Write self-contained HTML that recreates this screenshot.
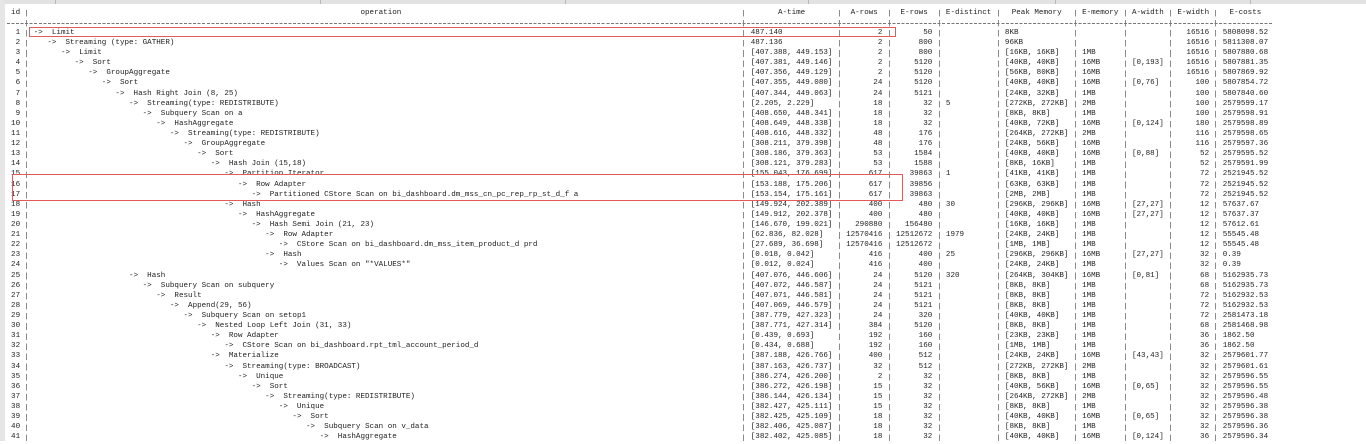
<!DOCTYPE html>
<html><head><meta charset="utf-8"><style>
body{margin:0;width:1366px;height:441px;background:#fff;position:relative;overflow:hidden;font:7.57px "Liberation Mono",monospace;color:#222}
#top{position:absolute;left:0;top:0;width:1366px;height:4px;background:#e2e2e2}
#top i{position:absolute;top:0;width:1px;height:4px;background:#b8b8b8}
#left{position:absolute;left:0;top:0;width:5px;height:441px;background:#e6e6e6}
#g{position:absolute;left:6.5px;top:7.7px;width:1360px;height:436px}
p{margin:0;height:10.11px;line-height:10.11px;position:relative;white-space:pre}
p span{position:absolute;top:0}
.i{left:0;width:3ch;text-align:right}
.t{left:164ch}
.ar{left:185ch;width:8ch;text-align:right}
.er{left:196ch;width:8ch;text-align:right}
.ed{left:207ch}
.pk{left:220ch}
.em{left:237ch}
.aw{left:248ch}
.ew{left:258ch;width:7ch;text-align:right}
.ec{left:268ch}
.v{position:absolute;top:0;width:1px;height:436px;background:repeating-linear-gradient(to bottom,transparent 0 1.8px,#8c8c8c 1.8px 8.4px,transparent 8.4px 10.11px)}
#dash{position:absolute;left:0;top:15.1px;width:279ch;height:1px;background:repeating-linear-gradient(90deg,#777 0 3px,transparent 3px 4.54px)}
.box{position:absolute;border:1px solid #e25a5a}
</style></head><body>
<div id="top"><i style="left:55px"></i><i style="left:320px"></i><i style="left:565px"></i><i style="left:808px"></i><i style="left:1055px"></i><i style="left:1250px"></i></div>
<div id="left"></div>
<div id="g">
<div class="v" style="left:calc(4.5ch - .5px)"></div>
<div class="v" style="left:calc(162.5ch - .5px)"></div>
<div class="v" style="left:calc(183.5ch - .5px)"></div>
<div class="v" style="left:calc(194.5ch - .5px)"></div>
<div class="v" style="left:calc(205.5ch - .5px)"></div>
<div class="v" style="left:calc(218.5ch - .5px)"></div>
<div class="v" style="left:calc(235.5ch - .5px)"></div>
<div class="v" style="left:calc(246.5ch - .5px)"></div>
<div class="v" style="left:calc(256.5ch - .5px)"></div>
<div class="v" style="left:calc(266.5ch - .5px)"></div>
<div id="dash"></div>
<p><span style="left:1ch">id</span><span style="left:78ch">operation</span><span style="left:164ch;width:18ch;text-align:center">A-time</span><span style="left:185ch;width:8ch;text-align:center">A-rows</span><span style="left:196ch;width:8ch;text-align:center">E-rows</span><span style="left:207ch">E-distinct</span><span style="left:220ch;width:14ch;text-align:center">Peak Memory</span><span style="left:237ch">E-memory</span><span style="left:248ch">A-width</span><span style="left:258ch">E-width</span><span style="left:268ch;width:10ch;text-align:center">E-costs</span></p>
<p></p>
<p><span class=i>1</span><span style="left:6ch">->  Limit</span><span class=t>487.140</span><span class=ar>2</span><span class=er>50</span><span class=pk>8KB</span><span class=ew>16516</span><span class=ec>5808098.52</span></p>
<p><span class=i>2</span><span style="left:9ch">->  Streaming (type: GATHER)</span><span class=t>487.136</span><span class=ar>2</span><span class=er>800</span><span class=pk>96KB</span><span class=ew>16516</span><span class=ec>5811308.07</span></p>
<p><span class=i>3</span><span style="left:12ch">->  Limit</span><span class=t>[407.388, 449.153]</span><span class=ar>2</span><span class=er>800</span><span class=pk>[16KB, 16KB]</span><span class=em>1MB</span><span class=ew>16516</span><span class=ec>5807880.68</span></p>
<p><span class=i>4</span><span style="left:15ch">->  Sort</span><span class=t>[407.381, 449.146]</span><span class=ar>2</span><span class=er>5120</span><span class=pk>[40KB, 40KB]</span><span class=em>16MB</span><span class=aw>[0,193]</span><span class=ew>16516</span><span class=ec>5807881.35</span></p>
<p><span class=i>5</span><span style="left:18ch">->  GroupAggregate</span><span class=t>[407.356, 449.129]</span><span class=ar>2</span><span class=er>5120</span><span class=pk>[56KB, 80KB]</span><span class=em>16MB</span><span class=ew>16516</span><span class=ec>5807869.92</span></p>
<p><span class=i>6</span><span style="left:21ch">->  Sort</span><span class=t>[407.355, 449.080]</span><span class=ar>24</span><span class=er>5120</span><span class=pk>[40KB, 40KB]</span><span class=em>16MB</span><span class=aw>[0,76]</span><span class=ew>100</span><span class=ec>5807854.72</span></p>
<p><span class=i>7</span><span style="left:24ch">->  Hash Right Join (8, 25)</span><span class=t>[407.344, 449.063]</span><span class=ar>24</span><span class=er>5121</span><span class=pk>[24KB, 32KB]</span><span class=em>1MB</span><span class=ew>100</span><span class=ec>5807840.60</span></p>
<p><span class=i>8</span><span style="left:27ch">->  Streaming(type: REDISTRIBUTE)</span><span class=t>[2.205, 2.229]</span><span class=ar>18</span><span class=er>32</span><span class=ed>5</span><span class=pk>[272KB, 272KB]</span><span class=em>2MB</span><span class=ew>100</span><span class=ec>2579599.17</span></p>
<p><span class=i>9</span><span style="left:30ch">->  Subquery Scan on a</span><span class=t>[408.650, 448.341]</span><span class=ar>18</span><span class=er>32</span><span class=pk>[8KB, 8KB]</span><span class=em>1MB</span><span class=ew>100</span><span class=ec>2579598.91</span></p>
<p><span class=i>10</span><span style="left:33ch">->  HashAggregate</span><span class=t>[408.649, 448.338]</span><span class=ar>18</span><span class=er>32</span><span class=pk>[40KB, 72KB]</span><span class=em>16MB</span><span class=aw>[0,124]</span><span class=ew>180</span><span class=ec>2579598.89</span></p>
<p><span class=i>11</span><span style="left:36ch">->  Streaming(type: REDISTRIBUTE)</span><span class=t>[408.616, 448.332]</span><span class=ar>48</span><span class=er>176</span><span class=pk>[264KB, 272KB]</span><span class=em>2MB</span><span class=ew>116</span><span class=ec>2579598.65</span></p>
<p><span class=i>12</span><span style="left:39ch">->  GroupAggregate</span><span class=t>[308.211, 379.398]</span><span class=ar>48</span><span class=er>176</span><span class=pk>[24KB, 56KB]</span><span class=em>16MB</span><span class=ew>116</span><span class=ec>2579597.36</span></p>
<p><span class=i>13</span><span style="left:42ch">->  Sort</span><span class=t>[308.186, 379.363]</span><span class=ar>53</span><span class=er>1584</span><span class=pk>[40KB, 40KB]</span><span class=em>16MB</span><span class=aw>[0,88]</span><span class=ew>52</span><span class=ec>2579595.52</span></p>
<p><span class=i>14</span><span style="left:45ch">->  Hash Join (15,18)</span><span class=t>[308.121, 379.283]</span><span class=ar>53</span><span class=er>1588</span><span class=pk>[8KB, 16KB]</span><span class=em>1MB</span><span class=ew>52</span><span class=ec>2579591.99</span></p>
<p><span class=i>15</span><span style="left:48ch">->  Partition Iterator</span><span class=t>[155.043, 176.699]</span><span class=ar>617</span><span class=er>39863</span><span class=ed>1</span><span class=pk>[41KB, 41KB]</span><span class=em>1MB</span><span class=ew>72</span><span class=ec>2521945.52</span></p>
<p><span class=i>16</span><span style="left:51ch">->  Row Adapter</span><span class=t>[153.188, 175.206]</span><span class=ar>617</span><span class=er>39856</span><span class=pk>[63KB, 63KB]</span><span class=em>1MB</span><span class=ew>72</span><span class=ec>2521945.52</span></p>
<p><span class=i>17</span><span style="left:54ch">->  Partitioned CStore Scan on bi_dashboard.dm_mss_cn_pc_rep_rp_st_d_f a</span><span class=t>[153.154, 175.161]</span><span class=ar>617</span><span class=er>39863</span><span class=pk>[2MB, 2MB]</span><span class=em>1MB</span><span class=ew>72</span><span class=ec>2521945.52</span></p>
<p><span class=i>18</span><span style="left:48ch">->  Hash</span><span class=t>[149.924, 202.389]</span><span class=ar>400</span><span class=er>480</span><span class=ed>30</span><span class=pk>[296KB, 296KB]</span><span class=em>16MB</span><span class=aw>[27,27]</span><span class=ew>12</span><span class=ec>57637.67</span></p>
<p><span class=i>19</span><span style="left:51ch">->  HashAggregate</span><span class=t>[149.912, 202.378]</span><span class=ar>400</span><span class=er>480</span><span class=pk>[40KB, 40KB]</span><span class=em>16MB</span><span class=aw>[27,27]</span><span class=ew>12</span><span class=ec>57637.37</span></p>
<p><span class=i>20</span><span style="left:54ch">->  Hash Semi Join (21, 23)</span><span class=t>[146.670, 199.021]</span><span class=ar>290880</span><span class=er>156480</span><span class=pk>[16KB, 16KB]</span><span class=em>1MB</span><span class=ew>12</span><span class=ec>57612.61</span></p>
<p><span class=i>21</span><span style="left:57ch">->  Row Adapter</span><span class=t>[62.836, 82.028]</span><span class=ar>12570416</span><span class=er>12512672</span><span class=ed>1979</span><span class=pk>[24KB, 24KB]</span><span class=em>1MB</span><span class=ew>12</span><span class=ec>55545.48</span></p>
<p><span class=i>22</span><span style="left:60ch">->  CStore Scan on bi_dashboard.dm_mss_item_product_d prd</span><span class=t>[27.689, 36.698]</span><span class=ar>12570416</span><span class=er>12512672</span><span class=pk>[1MB, 1MB]</span><span class=em>1MB</span><span class=ew>12</span><span class=ec>55545.48</span></p>
<p><span class=i>23</span><span style="left:57ch">->  Hash</span><span class=t>[0.018, 0.042]</span><span class=ar>416</span><span class=er>400</span><span class=ed>25</span><span class=pk>[296KB, 296KB]</span><span class=em>16MB</span><span class=aw>[27,27]</span><span class=ew>32</span><span class=ec>0.39</span></p>
<p><span class=i>24</span><span style="left:60ch">->  Values Scan on "*VALUES*"</span><span class=t>[0.012, 0.024]</span><span class=ar>416</span><span class=er>400</span><span class=pk>[24KB, 24KB]</span><span class=em>1MB</span><span class=ew>32</span><span class=ec>0.39</span></p>
<p><span class=i>25</span><span style="left:27ch">->  Hash</span><span class=t>[407.076, 446.606]</span><span class=ar>24</span><span class=er>5120</span><span class=ed>320</span><span class=pk>[264KB, 304KB]</span><span class=em>16MB</span><span class=aw>[0,81]</span><span class=ew>68</span><span class=ec>5162935.73</span></p>
<p><span class=i>26</span><span style="left:30ch">->  Subquery Scan on subquery</span><span class=t>[407.072, 446.587]</span><span class=ar>24</span><span class=er>5121</span><span class=pk>[8KB, 8KB]</span><span class=em>1MB</span><span class=ew>68</span><span class=ec>5162935.73</span></p>
<p><span class=i>27</span><span style="left:33ch">->  Result</span><span class=t>[407.071, 446.581]</span><span class=ar>24</span><span class=er>5121</span><span class=pk>[8KB, 8KB]</span><span class=em>1MB</span><span class=ew>72</span><span class=ec>5162932.53</span></p>
<p><span class=i>28</span><span style="left:36ch">->  Append(29, 56)</span><span class=t>[407.069, 446.579]</span><span class=ar>24</span><span class=er>5121</span><span class=pk>[8KB, 8KB]</span><span class=em>1MB</span><span class=ew>72</span><span class=ec>5162932.53</span></p>
<p><span class=i>29</span><span style="left:39ch">->  Subquery Scan on setop1</span><span class=t>[387.779, 427.323]</span><span class=ar>24</span><span class=er>320</span><span class=pk>[40KB, 40KB]</span><span class=em>1MB</span><span class=ew>72</span><span class=ec>2581473.18</span></p>
<p><span class=i>30</span><span style="left:42ch">->  Nested Loop Left Join (31, 33)</span><span class=t>[387.771, 427.314]</span><span class=ar>384</span><span class=er>5120</span><span class=pk>[8KB, 8KB]</span><span class=em>1MB</span><span class=ew>68</span><span class=ec>2581468.98</span></p>
<p><span class=i>31</span><span style="left:45ch">->  Row Adapter</span><span class=t>[0.439, 0.693]</span><span class=ar>192</span><span class=er>160</span><span class=pk>[23KB, 23KB]</span><span class=em>1MB</span><span class=ew>36</span><span class=ec>1862.50</span></p>
<p><span class=i>32</span><span style="left:48ch">->  CStore Scan on bi_dashboard.rpt_tml_account_period_d</span><span class=t>[0.434, 0.688]</span><span class=ar>192</span><span class=er>160</span><span class=pk>[1MB, 1MB]</span><span class=em>1MB</span><span class=ew>36</span><span class=ec>1862.50</span></p>
<p><span class=i>33</span><span style="left:45ch">->  Materialize</span><span class=t>[387.188, 426.766]</span><span class=ar>400</span><span class=er>512</span><span class=pk>[24KB, 24KB]</span><span class=em>16MB</span><span class=aw>[43,43]</span><span class=ew>32</span><span class=ec>2579601.77</span></p>
<p><span class=i>34</span><span style="left:48ch">->  Streaming(type: BROADCAST)</span><span class=t>[387.163, 426.737]</span><span class=ar>32</span><span class=er>512</span><span class=pk>[272KB, 272KB]</span><span class=em>2MB</span><span class=ew>32</span><span class=ec>2579601.61</span></p>
<p><span class=i>35</span><span style="left:51ch">->  Unique</span><span class=t>[386.274, 426.200]</span><span class=ar>2</span><span class=er>32</span><span class=pk>[8KB, 8KB]</span><span class=em>1MB</span><span class=ew>32</span><span class=ec>2579596.55</span></p>
<p><span class=i>36</span><span style="left:54ch">->  Sort</span><span class=t>[386.272, 426.198]</span><span class=ar>15</span><span class=er>32</span><span class=pk>[40KB, 56KB]</span><span class=em>16MB</span><span class=aw>[0,65]</span><span class=ew>32</span><span class=ec>2579596.55</span></p>
<p><span class=i>37</span><span style="left:57ch">->  Streaming(type: REDISTRIBUTE)</span><span class=t>[386.144, 426.134]</span><span class=ar>15</span><span class=er>32</span><span class=pk>[264KB, 272KB]</span><span class=em>2MB</span><span class=ew>32</span><span class=ec>2579596.48</span></p>
<p><span class=i>38</span><span style="left:60ch">->  Unique</span><span class=t>[382.427, 425.111]</span><span class=ar>15</span><span class=er>32</span><span class=pk>[8KB, 8KB]</span><span class=em>1MB</span><span class=ew>32</span><span class=ec>2579596.38</span></p>
<p><span class=i>39</span><span style="left:63ch">->  Sort</span><span class=t>[382.425, 425.109]</span><span class=ar>18</span><span class=er>32</span><span class=pk>[40KB, 40KB]</span><span class=em>16MB</span><span class=aw>[0,65]</span><span class=ew>32</span><span class=ec>2579596.38</span></p>
<p><span class=i>40</span><span style="left:66ch">->  Subquery Scan on v_data</span><span class=t>[382.406, 425.087]</span><span class=ar>18</span><span class=er>32</span><span class=pk>[8KB, 8KB]</span><span class=em>1MB</span><span class=ew>32</span><span class=ec>2579596.36</span></p>
<p><span class=i>41</span><span style="left:69ch">->  HashAggregate</span><span class=t>[382.402, 425.085]</span><span class=ar>18</span><span class=er>32</span><span class=pk>[40KB, 40KB]</span><span class=em>16MB</span><span class=aw>[0,124]</span><span class=ew>36</span><span class=ec>2579596.34</span></p>
</div>
<div class="box" style="left:29px;top:27px;width:865px;height:8px"></div>
<div class="box" style="left:12px;top:174px;width:889px;height:25px"></div>
</body></html>
